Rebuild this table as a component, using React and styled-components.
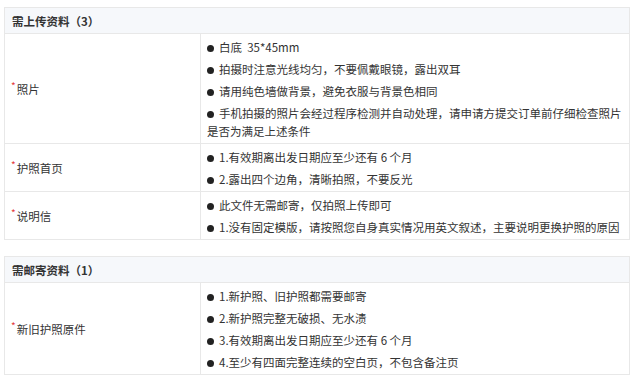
import React from "react";
import styled, { createGlobalStyle } from "styled-components";

const sections = [
  {
    title: "需上传资料（3）",
    rows: [
      {
        label: "照片",
        items: [
          "白底  35*45mm",
          "拍摄时注意光线均匀，不要佩戴眼镜，露出双耳",
          "请用纯色墙做背景，避免衣服与背景色相同",
          "手机拍摄的照片会经过程序检测并自动处理，请申请方提交订单前仔细检查照片是否为满足上述条件",
        ],
      },
      {
        label: "护照首页",
        items: ["1.有效期离出发日期应至少还有 6 个月", "2.露出四个边角，清晰拍照，不要反光"],
      },
      {
        label: "说明信",
        items: [
          "此文件无需邮寄，仅拍照上传即可",
          "1.没有固定模版，请按照您自身真实情况用英文叙述，主要说明更换护照的原因",
        ],
      },
    ],
  },
  {
    title: "需邮寄资料（1）",
    rows: [
      {
        label: "新旧护照原件",
        items: [
          "1.新护照、旧护照都需要邮寄",
          "2.新护照完整无破损、无水渍",
          "3.有效期离出发日期应至少还有 6 个月",
          "4.至少有四面完整连续的空白页，不包含备注页",
        ],
      },
    ],
  },
];

export default function App() {
  return (
    <>
      <GlobalStyle />
      <Page>
        {sections.map((sec) => (
          <Section key={sec.title}>
            <Header>{sec.title}</Header>
            {sec.rows.map((row) => (
              <Row key={row.label}>
                <Label>
                  <Star>*</Star>
                  {row.label}
                </Label>
                <Content>
                  {row.items.map((item) => (
                    <Item key={item}>
                      <Dot />
                      {item}
                    </Item>
                  ))}
                </Content>
              </Row>
            ))}
          </Section>
        ))}
      </Page>
    </>
  );
}

/*STYLES*/
const GlobalStyle = createGlobalStyle`
  body {
    margin: 0;
    background: #fff;
    font-family: "Noto Sans CJK SC", "Noto Sans", sans-serif;
    color: #333;
  }
`;
const Page = styled.div`
  display: flex;
  flex-direction: column;
  gap: 16px;
  padding: 7px 10px 0 4px;
  width: 626px;
`;
const Section = styled.div`
  border: 1px solid #e8e8e8;
`;
const Header = styled.div`
  height: 25px;
  display: flex;
  align-items: center;
  padding-left: 7px;
  background: #f6f8fb;
  font-size: 11.5px;
  font-weight: bold;
  color: #333;
`;
const Row = styled.div`
  display: grid;
  grid-template-columns: 196px 1fr;
  border-top: 1px solid #e8e8e8;
`;
const Label = styled.div`
  display: flex;
  align-items: center;
  padding-left: 6px;
  font-size: 11.5px;
  border-right: 1px solid #e8e8e8;
`;
const Star = styled.span`
  color: #e4393c;
  font-size: 10px;
  margin-top: -6px;
  margin-right: 1px;
`;
const Content = styled.div`
  display: flex;
  flex-direction: column;
  gap: 4px;
  padding: 4px 7px 3px 6px;
`;
const Item = styled.div`
  font-size: 11.5px;
  line-height: 18px;
  white-space: pre-wrap;
`;
const Dot = styled.span`
  display: inline-block;
  width: 7px;
  height: 7px;
  border-radius: 50%;
  background: #222;
  margin: 0 5px 1px 0;
  vertical-align: middle;
`;
